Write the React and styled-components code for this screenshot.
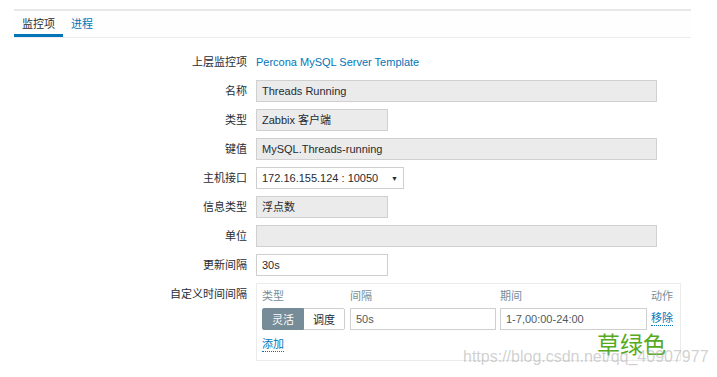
import styled, { createGlobalStyle } from "styled-components";

const GlobalStyle = createGlobalStyle`
  html, body {
    margin: 0;
    padding: 0;
    background: #ffffff;
  }
  body {
    font-family: "Liberation Sans", Arial, "Noto Sans CJK SC", sans-serif;
    font-size: 11px;
    color: #1f2c33;
  }
`;

const fields = [
  { label: "名称", value: "Threads Running", size: "wide", ro: true },
  { label: "类型", value: "Zabbix 客户端", size: "short", ro: true },
  { label: "键值", value: "MySQL.Threads-running", size: "wide", ro: true },
];

const fields2 = [
  { label: "信息类型", value: "浮点数", size: "short", ro: true },
  { label: "单位", value: "", size: "wide", ro: true },
  { label: "更新间隔", value: "30s", size: "short", ro: false },
];

function App() {
  return (
    <>
      <GlobalStyle />
      <Page>
        <Panel>
          <Tabs>
            <Tab active>监控项</Tab>
            <Tab>进程</Tab>
          </Tabs>
          <Form>
            <Label>上层监控项</Label>
            <Field>
              <Link>Percona MySQL Server Template</Link>
            </Field>
            {fields.map((f) => (
              <Row key={f.label} f={f} />
            ))}
            <Label>主机接口</Label>
            <Field>
              <Select>
                <span>172.16.155.124 : 10050</span>
                <Arrow>▼</Arrow>
              </Select>
            </Field>
            {fields2.map((f) => (
              <Row key={f.label} f={f} />
            ))}
            <Label>自定义时间间隔</Label>
            <Field>
              <IntervalBox>
                <IntervalGrid>
                  <Head>类型</Head>
                  <Head>间隔</Head>
                  <Head>期间</Head>
                  <Head right>动作</Head>
                  <Segmented>
                    <SegButton active>灵活</SegButton>
                    <SegButton>调度</SegButton>
                  </Segmented>
                  <Input size="fill">50s</Input>
                  <Input size="fill">1-7,00:00-24:00</Input>
                  <DottedLink>移除</DottedLink>
                </IntervalGrid>
                <AddRow>
                  <DottedLink>添加</DottedLink>
                </AddRow>
              </IntervalBox>
            </Field>
          </Form>
        </Panel>
        <Stamp>草绿色</Stamp>
        <Watermark>https://blog.csdn.net/qq_40907977</Watermark>
      </Page>
    </>
  );
}

function Row({ f }) {
  return (
    <>
      <Label>{f.label}</Label>
      <Field>
        <Input size={f.size} readOnly={f.ro}>
          {f.value}
        </Input>
      </Field>
    </>
  );
}

export default App;

const Page = styled.div`
  position: relative;
  width: 717px;
  height: 377px;
  padding: 9px 0 0 14px;
  box-sizing: border-box;
  overflow: hidden;
`;

const Panel = styled.div`
  width: 677px;
`;

const Tabs = styled.div`
  display: flex;
  height: 26px;
  border-top: 2px solid #e8e8e8;
  border-bottom: 1px solid #ebebeb;
  background: #fdfefd;
`;

const Tab = styled.div`
  display: flex;
  align-items: center;
  padding: 0 8px;
  box-sizing: border-box;
  color: ${(p) => (p.active ? "#1f2c33" : "#0275b8")};
  border-bottom: 3px solid ${(p) => (p.active ? "#0275b8" : "transparent")};
`;

const Form = styled.div`
  display: grid;
  grid-template-columns: 233px 1fr;
  column-gap: 9px;
  row-gap: 7px;
  margin-top: 13px;
  grid-auto-rows: 22px;
`;

const Label = styled.div`
  text-align: right;
  line-height: 22px;
  white-space: nowrap;
`;

const Field = styled.div`
  display: flex;
  align-items: center;
  min-height: 22px;
`;

const Link = styled.span`
  color: #0275b8;
`;

const widths = { wide: "401px", short: "132px", fill: "100%" };

const Input = styled.div`
  box-sizing: border-box;
  width: ${(p) => widths[p.size]};
  height: 22px;
  line-height: 20px;
  padding: 0 5px;
  border: 1px solid ${(p) => (p.readOnly ? "#d0d0d0" : "#cfcfcf")};
  background: ${(p) => (p.readOnly ? "#ebebeb" : "#ffffff")};
  color: ${(p) => (p.size === "fill" ? "#4f5a60" : "#1f2c33")};
  white-space: nowrap;
  overflow: hidden;
`;

const Select = styled.div`
  box-sizing: border-box;
  width: 148px;
  height: 22px;
  padding: 0 5px;
  border: 1px solid #cfcfcf;
  background: #ffffff;
  display: flex;
  align-items: center;
  justify-content: space-between;
  white-space: nowrap;
`;

const Arrow = styled.span`
  font-size: 7px;
  color: #1f2c33;
`;

const IntervalBox = styled.div`
  align-self: flex-start;
  box-sizing: border-box;
  width: 425px;
  height: 78px;
  border: 1px solid #ebebeb;
  padding: 4px 7px 0 5px;
`;

const IntervalGrid = styled.div`
  display: grid;
  grid-template-columns: 84px 146px 147px 1fr;
  column-gap: 4px;
  row-gap: 4px;
  grid-template-rows: 16px 22px;
  align-items: center;
`;

const Head = styled.div`
  color: #768d99;
  line-height: 16px;
  white-space: nowrap;
  text-align: ${(p) => (p.right ? "right" : "left")};
`;

const Segmented = styled.div`
  display: flex;
  width: 83px;
  height: 22px;
`;

const SegButton = styled.div`
  flex: 1;
  box-sizing: border-box;
  display: flex;
  align-items: center;
  justify-content: center;
  background: ${(p) => (p.active ? "#768d99" : "#ffffff")};
  color: ${(p) => (p.active ? "#ffffff" : "#1f2c33")};
  border: 1px solid ${(p) => (p.active ? "#768d99" : "#cfcfcf")};
  border-left: ${(p) => (p.active ? "1px solid #768d99" : "none")};
  border-radius: ${(p) => (p.active ? "2px 0 0 2px" : "0 2px 2px 0")};
`;

const DottedLink = styled.span`
  justify-self: end;
  white-space: nowrap;
  color: #0275b8;
  border-bottom: 1px dotted #0275b8;
  line-height: 13px;
`;

const AddRow = styled.div`
  margin-top: 7px;
  height: 16px;
  display: flex;
  align-items: center;
`;

const Stamp = styled.div`
  position: absolute;
  left: 597px;
  top: 328px;
  font-family: "Noto Sans CJK SC", sans-serif;
  font-size: 23px;
  line-height: 30px;
  color: #56aa22;
`;

const Watermark = styled.div`
  position: absolute;
  left: 463px;
  top: 348px;
  font-family: "Liberation Sans", Arial, sans-serif;
  font-size: 16px;
  line-height: 18px;
  color: rgba(170, 170, 170, 0.55);
`;
